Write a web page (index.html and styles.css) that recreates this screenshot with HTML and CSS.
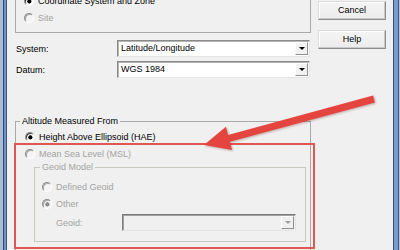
FILE: index.html
```html
<!DOCTYPE html>
<html>
<head>
<meta charset="utf-8">
<link rel="stylesheet" href="styles.css">
</head>
<body>
<div class="window">
  <div class="frame-l"></div>
  <div class="client">
    <div class="main">
      <div class="group top-group">
        <div class="radio-row"><span class="rb checked"></span><span>Coordinate System and Zone</span></div>
        <div class="radio-row dis"><span class="rb"></span><span>Site</span></div>
      </div>
      <div class="field-row">
        <span class="lbl">System:</span>
        <div class="select"><span class="val">Latitude/Longitude</span><span class="dd"><i></i></span></div>
      </div>
      <div class="field-row second">
        <span class="lbl">Datum:</span>
        <div class="select"><span class="val">WGS 1984</span><span class="dd"><i></i></span></div>
      </div>
      <fieldset class="fs alt-group">
        <legend>Altitude Measured From</legend>
        <div class="fs-body alt-body">
          <div class="radio-row"><span class="rb checked"></span><span>Height Above Ellipsoid (HAE)</span></div>
          <div class="radio-row dis"><span class="rb"></span><span>Mean Sea Level (MSL)</span></div>
          <fieldset class="fs geoid-group">
            <legend class="dis">Geoid Model</legend>
            <div class="fs-body geoid-body">
              <div class="radio-row dis"><span class="rb"></span><span>Defined Geoid</span></div>
              <div class="radio-row dis"><span class="rb checked"></span><span>Other</span></div>
              <div class="geoid-row dis">
                <span class="glbl">Geoid:</span>
                <div class="select disabled"><span class="val"></span><span class="dd"><i></i></span></div>
              </div>
            </div>
          </fieldset>
        </div>
      </fieldset>
    </div>
    <div class="buttons">
      <div class="btn">Cancel</div>
      <div class="btn">Help</div>
    </div>
  </div>
  <div class="frame-r"></div>
  <div class="annot-box"></div>
  <svg class="arrow" width="400" height="250" viewBox="0 0 400 250">
    <polygon points="373.1,95.6 228.1,134.9 225.9,126.7 204,145 232.1,149.9 229.9,141.7 374.9,102.4" fill="#e4463f"/>
  </svg>
</div>
</body>
</html>
```
FILE: styles.css
```css
html, body {
  margin: 0;
  padding: 0;
  background: #f0f0f0;
}
body {
  font-family: "Liberation Sans", Arial, sans-serif;
  font-size: 9px;
  color: #000;
}
.window {
  position: relative;
  width: 400px;
  height: 250px;
  overflow: hidden;
  display: flex;
  background: #f0f0f0;
}
.frame-l {
  width: 7px;
  flex: none;
  background: linear-gradient(to right, #aebcd3 0 3px, #2f4a72 3px 4px, #6f92c9 4px 6px, #3a557e 6px 7px);
}
.frame-r {
  width: 7px;
  flex: none;
  background: linear-gradient(to right, #33507a 0 1px, #7b9bcf 1px 5px, #3a557e 5px 6px, #b9c6da 6px 7px);
}
.client {
  flex: 1;
  display: flex;
  align-items: flex-start;
  padding: 0 7px 0 8px;
  gap: 7px;
}
.main {
  width: 296px;
  flex: none;
  display: flex;
  flex-direction: column;
  margin-top: -20px;
}
.group {
  border: 1px solid #a9a9a9;
}
.top-group {
  padding: 12px 0 5px 8px;
}
.radio-row {
  display: flex;
  align-items: center;
  gap: 4px;
  height: 16px;
  margin-bottom: 1px;
  white-space: nowrap;
}
.rb {
  width: 10px;
  height: 10px;
  box-sizing: border-box;
  border-radius: 50%;
  border: 1px solid;
  border-color: #8c8c8c #ffffff #ffffff #8c8c8c;
  background: #fff;
  box-shadow: inset 1px 1px 0 #3c3c3c;
  flex: none;
}
.rb.checked {
  background: radial-gradient(circle at 55% 55%, #000 0 1.8px, #fff 2.4px);
}
.dis {
  color: #a3a3a3;
}
.dis .rb {
  background: #f4f4f4;
  box-shadow: inset 1px 1px 0 #a8a8a8;
}
.dis .rb.checked {
  background: radial-gradient(circle at 55% 55%, #8a8a8a 0 1.8px, #f4f4f4 2.4px);
}
.field-row {
  display: flex;
  align-items: center;
  height: 17px;
  margin-top: 7px;
}
.field-row.second {
  margin-top: 4px;
}
.lbl {
  width: 101px;
  padding-left: 1px;
  flex: none;
}
.select {
  width: 193px;
  height: 17px;
  box-sizing: border-box;
  display: flex;
  align-items: stretch;
  background: #fff;
  border: 1px solid;
  border-color: #8a8a8a #e4e4e4 #e4e4e4 #8a8a8a;
  box-shadow: inset 1px 1px 0 #b4b4b4;
}
.val {
  flex: 1;
  padding-left: 3px;
  line-height: 15px;
}
.dd {
  width: 13px;
  margin: 1px 1px 1px 0;
  box-sizing: border-box;
  border: 1px solid;
  border-color: #fff #8f8f8f #8f8f8f #fff;
  background: #f2f2f2;
  display: flex;
  align-items: center;
  justify-content: center;
}
.dd i {
  width: 0;
  height: 0;
  border-left: 3px solid transparent;
  border-right: 3px solid transparent;
  border-top: 3px solid #000;
}
.fs {
  margin: 0;
  padding: 0;
  min-width: 0;
  border: 1px solid #a9a9a9;
}
.fs legend {
  padding: 0 2px;
  margin-left: 4px;
  line-height: 12px;
  height: 12px;
}
.alt-group {
  margin-top: 37px;
  height: 160px;
}
.alt-body {
  padding: 2px 0 0 9px;
}
.geoid-group {
  margin: -2px 4px 0 9px;
  border-color: #c6c9c0;
}
.geoid-group legend {
  margin-left: 5px;
}
.geoid-body {
  padding: 6px 0 10px 7px;
}
.geoid-row {
  display: flex;
  align-items: center;
  margin-top: 2px;
}
.glbl {
  width: 66px;
  padding-left: 14px;
  flex: none;
}
.select.disabled {
  width: 174px;
  background: #f0f0f0;
  border-color: #7c7c7c #e4e4e4 #e4e4e4 #7c7c7c;
  box-shadow: inset 1px 1px 0 #a0a0a0;
}
.select.disabled .dd {
  background: #f0f0f0;
}
.select.disabled .dd i {
  border-top-color: #a0a0a0;
}
.buttons {
  width: 68px;
  flex: none;
  display: flex;
  flex-direction: column;
  gap: 10px;
  padding-top: 1px;
}
.btn {
  height: 19px;
  box-sizing: border-box;
  border: 1px solid;
  border-color: #dcdcdc #8c8c8c #8c8c8c #dcdcdc;
  background: linear-gradient(#f4f4f4, #ececec);
  box-shadow: inset -1px -1px 0 #c9c9c9, inset 1px 1px 0 #fff;
  text-align: center;
  line-height: 17px;
}
.annot-box {
  position: absolute;
  left: 14px;
  top: 143px;
  width: 301px;
  height: 106px;
  box-sizing: border-box;
  border: 2px solid #df5652;
}
.arrow {
  position: absolute;
  left: 0;
  top: 0;
  filter: drop-shadow(1px 1px 1px rgba(120, 40, 40, 0.35));
}
```
